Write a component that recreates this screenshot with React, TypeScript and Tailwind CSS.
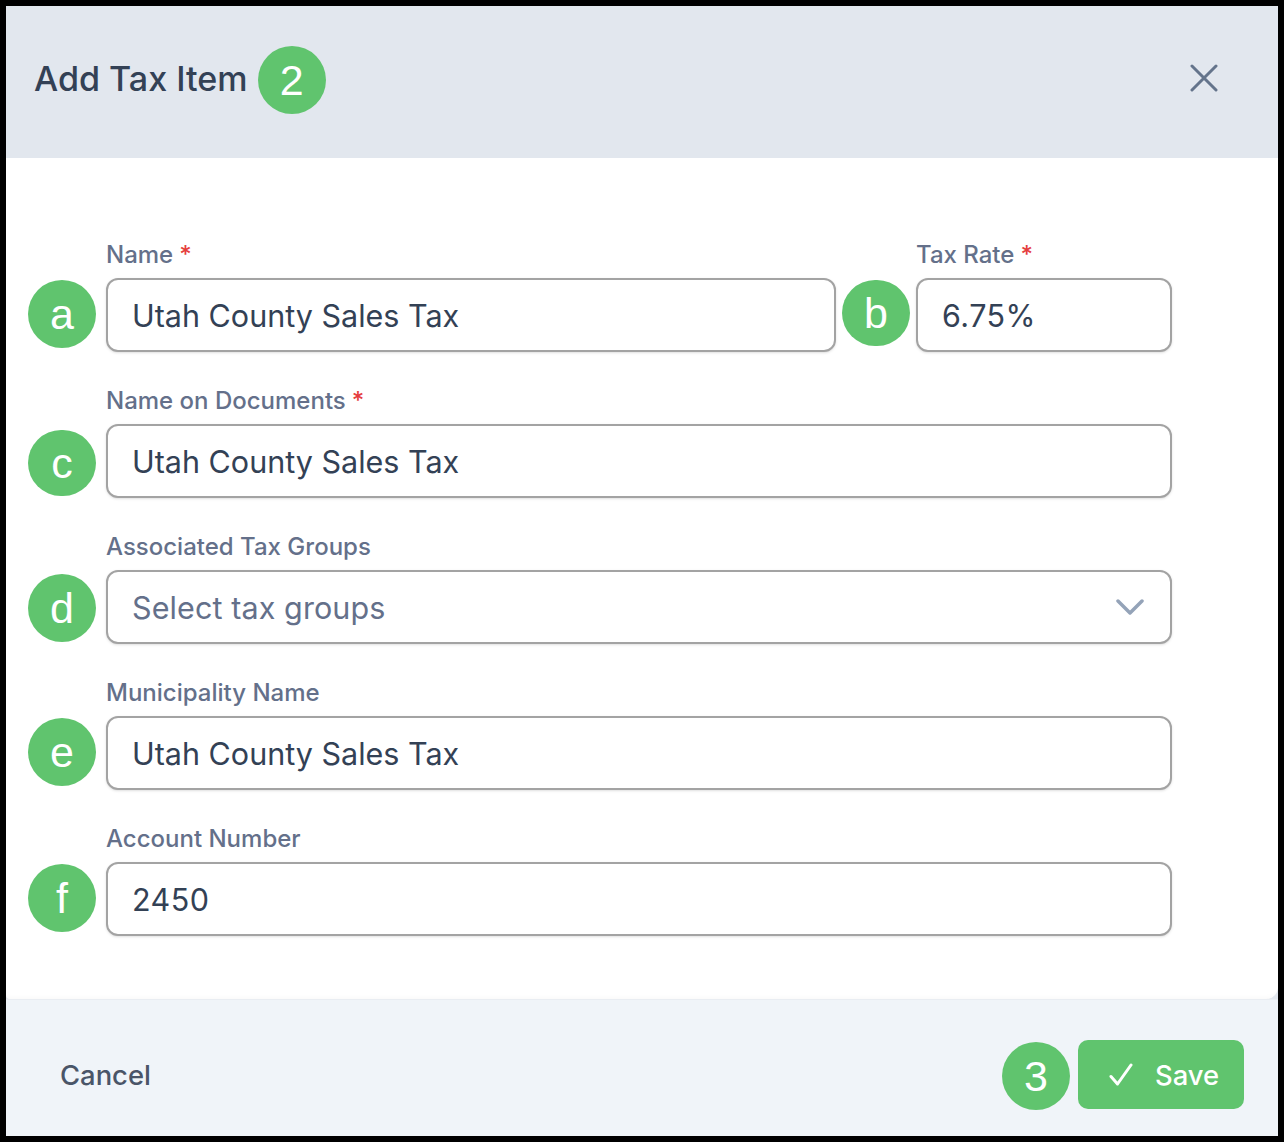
import React from "react";

const Badge = ({ children, short, className = "" }: { children: React.ReactNode; short?: boolean; className?: string }) => (
  <div
    className={`w-[68px] ${short ? "h-[66px]" : "h-[68px]"} shrink-0 rounded-full bg-[#60c46e] text-white flex items-center justify-center font-['Liberation_Sans',sans-serif] text-[43px] leading-none ${className}`}
  >
    {children}
  </div>
);

const Field = ({
  label,
  required,
  value,
  placeholder,
  chevron,
  numeric,
  className = "",
}: {
  label: string;
  required?: boolean;
  value?: string;
  placeholder?: string;
  chevron?: boolean;
  numeric?: boolean;
  className?: string;
}) => (
  <div className={className}>
    <div className="h-[24px] mb-[11px] flex items-center text-[24px] leading-none font-medium text-[#64708a]">
      {label}
      {required && <span className="ml-[6px] text-[#e53e3e]">*</span>}
    </div>
    <div className="h-[74px] rounded-[12px] border-2 border-[#a3a3a3] bg-white shadow-sm flex items-center justify-between pl-[24px] pr-[26px] pt-[2px] text-[30.5px]">
      {value ? (
        <span className={`text-[#334155] ${numeric ? "tracking-[0.45px]" : ""}`}>{value}</span>
      ) : (
        <span className="text-[#64708a] tracking-[0.1px]">{placeholder}</span>
      )}
      {chevron && (
        <svg width="28" height="16" viewBox="0 0 28 16" fill="none" stroke="#94a3b8" strokeWidth="3.5" strokeLinecap="round" strokeLinejoin="round" className="-mt-[2px]">
          <path d="M2 2l12 12L26 2" />
        </svg>
      )}
    </div>
  </div>
);

export default function App() {
  return (
    <div className="w-[1284px] h-[1142px] bg-black p-[6px] font-['Inter',sans-serif]">
      <div className="w-full h-full bg-[#e2e7ee] flex flex-col">
        <div className="h-[152px] shrink-0 flex items-center justify-between pl-[28px] pr-[60px] pb-[4px]">
          <div className="flex items-center gap-[10px]">
            <h1 className="text-[34.1px] font-medium text-[#334155] -mt-[2px]">Add Tax Item</h1>
            <Badge>2</Badge>
          </div>
          <svg width="28" height="28" viewBox="0 0 28 28" fill="none" stroke="#64748b" strokeWidth="3" strokeLinecap="round" className="mb-[4px]">
            <path d="M2 2l24 24M26 2L2 26" />
          </svg>
        </div>

        <div className="flex-1 bg-white rounded-bl-[4px] rounded-br-[12px] shadow-[inset_0_-6px_6px_-6px_rgba(0,0,0,0.04)] pt-[85px] pl-[22px] pr-[106px] flex flex-col gap-[37px]">
          <div className="flex items-start">
            <Badge className="mt-[37px] mr-[10px]">a</Badge>
            <Field label="Name" required value="Utah County Sales Tax" className="w-[730px]" />
            <Badge short className="mt-[37px] ml-[6px] mr-[6px]">b</Badge>
            <Field label="Tax Rate" required value="6.75%" numeric className="flex-1" />
          </div>
          <div className="flex items-start">
            <Badge short className="mt-[41px] mr-[10px]">c</Badge>
            <Field label="Name on Documents" required value="Utah County Sales Tax" className="flex-1" />
          </div>
          <div className="flex items-start">
            <Badge className="mt-[39px] mr-[10px]">d</Badge>
            <Field label="Associated Tax Groups" placeholder="Select tax groups" chevron className="flex-1" />
          </div>
          <div className="flex items-start">
            <Badge className="mt-[37px] mr-[10px]">e</Badge>
            <Field label="Municipality Name" value="Utah County Sales Tax" className="flex-1" />
          </div>
          <div className="flex items-start">
            <Badge className="mt-[37px] mr-[10px]">f</Badge>
            <Field label="Account Number" value="2450" numeric className="flex-1" />
          </div>
        </div>

        <div className="h-[137px] shrink-0 bg-[#f0f4f9] border-t border-[#e9edf2] flex items-center justify-between pl-[54px] pr-[34px] pt-[12px]">
          <button className="text-[27.4px] font-medium text-[#4a5568] mt-[4px]">Cancel</button>
          <div className="flex items-center gap-[8px]">
            <Badge className="mt-[4px]">3</Badge>
            <button className="w-[166px] h-[69px] rounded-[10px] bg-[#60c46e] text-white flex items-center pl-[31px] gap-[22px] text-[27.4px] font-medium">
              <svg width="24" height="23" viewBox="0 0 24 23" fill="none" stroke="white" strokeWidth="3" strokeLinecap="round" strokeLinejoin="round">
                <path d="M2 13.5l6.5 7.5L22 2" />
              </svg>
              <span className="mt-[4px]">Save</span>
            </button>
          </div>
        </div>
      </div>
    </div>
  );
}
